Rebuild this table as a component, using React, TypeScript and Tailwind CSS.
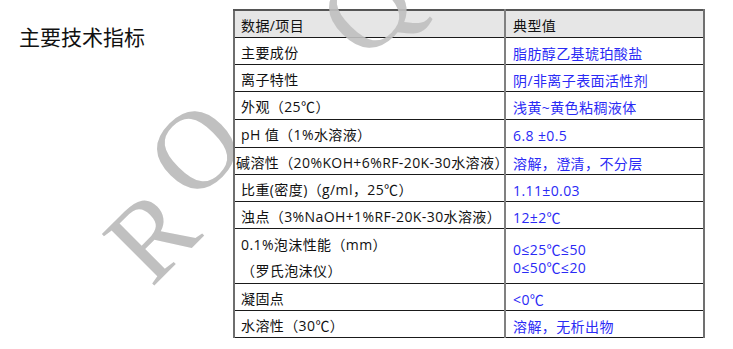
const rows: { name: string[]; value: string[]; h: string; tight?: boolean }[] = [
  { name: ["主要成份"], value: ["脂肪醇乙基琥珀酸盐"], h: "h-[27px]" },
  { name: ["离子特性"], value: ["阴/非离子表面活性剂"], h: "h-[27px]" },
  { name: ["外观（25℃）"], value: ["浅黄~黄色粘稠液体"], h: "h-[28px]" },
  { name: ["pH 值（1%水溶液）"], value: ["6.8 ±0.5"], h: "h-[28px]" },
  { name: ["碱溶性（20%KOH+6%RF-20K-30水溶液）"], value: ["溶解，澄清，不分层"], h: "h-[27px]", tight: true },
  { name: ["比重(密度)（g/ml，25℃）"], value: ["1.11±0.03"], h: "h-[27px]" },
  { name: ["浊点（3%NaOH+1%RF-20K-30水溶液）"], value: ["12±2℃"], h: "h-[27px]" },
  { name: ["0.1%泡沫性能（mm）", "（罗氏泡沫仪）"], value: ["0≤25℃≤50", "0≤50℃≤20"], h: "h-[55px]" },
  { name: ["凝固点"], value: ["<0℃"], h: "h-[27px]" },
  { name: ["水溶性（30℃）"], value: ["溶解，无析出物"], h: "h-[27px]" },
];

const mark =
  "pointer-events-none absolute flex h-[110px] w-[90px] -rotate-45 items-center justify-center font-['Liberation_Serif',serif] text-[112px] leading-none text-[#c0c0c0]";

export default function App() {
  return (
    <div className="relative h-[349px] w-[733px] overflow-hidden bg-white font-['Open_Sans','Noto_Sans_CJK_SC',sans-serif]">
      {/* watermark, sits under the table */}
      <span className={`${mark} left-[106px] top-[180px]`}>R</span>
      <span className={`${mark} left-[150px] top-[94px]`}>O</span>

      <div className="relative flex">
        <h1 className="w-[233px] shrink-0 pl-[19px] pt-[22px] font-['Noto_Sans_CJK_SC',sans-serif] text-[21px] font-normal leading-[28px] text-[#111]">
          主要技术指标
        </h1>
        <table className="mt-[9px] w-[470px] table-fixed border-collapse text-[14px] leading-[18px] tracking-[0.4px]">
          <colgroup>
            <col className="w-[271px]" />
            <col className="w-[199px]" />
          </colgroup>
          <thead>
            <tr className="h-[27px] bg-[#e6e6e6]">
              <th className="border-t-2 border-b border-l-2 border-r-2 border-t-[#555] border-b-[#1a1a1a] border-l-[#6e6e6e] border-r-[#808080] pl-[6px] pt-[4px] text-left align-middle font-normal text-[#111]">
                数据/项目
              </th>
              <th className="border-t-2 border-b border-r-2 border-t-[#555] border-b-[#1a1a1a] border-r-[#707070] pl-[7px] pt-[4px] text-left align-middle font-normal text-[#111]">
                典型值
              </th>
            </tr>
          </thead>
          <tbody className="bg-white">
            {rows.map((r, i) => (
              <tr key={i} className={r.h}>
                <td
                  className={`whitespace-nowrap border-b border-l-2 border-r-2 border-b-[#1a1a1a] border-l-[#6e6e6e] border-r-[#808080] pt-[4px] align-middle text-[#111] ${
                    r.tight ? "pl-[1px]" : "pl-[6px]"
                  }`}
                >
                  {r.name.length > 1 ? (
                    <div className="flex flex-col gap-[8px]">
                      {r.name.map((n) => (
                        <span key={n}>{n}</span>
                      ))}
                    </div>
                  ) : (
                    r.name[0]
                  )}
                </td>
                <td className="whitespace-nowrap border-b border-r-2 border-b-[#1a1a1a] border-r-[#707070] pl-[7px] pt-[6px] align-middle text-[#2a2af5]">
                  {r.value.map((v) => (
                    <div key={v}>{v}</div>
                  ))}
                </td>
              </tr>
            ))}
          </tbody>
        </table>
      </div>

      {/* this letter lies over the header */}
      <span className={`${mark} left-[322px] top-[-47px] opacity-90`}>Q</span>
    </div>
  );
}
